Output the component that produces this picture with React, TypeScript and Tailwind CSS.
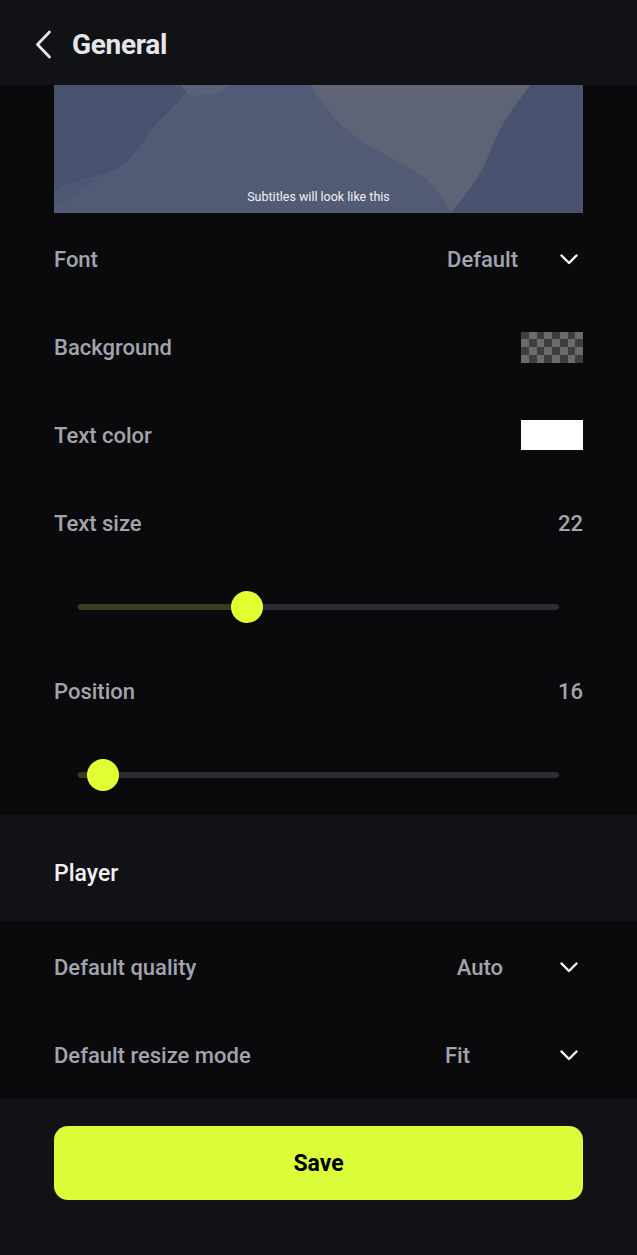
function Chevron() {
  return (
    <svg className="ml-auto w-[18px] h-[11px] mr-[5px]" viewBox="0 0 18 11" fill="none">
      <polyline points="1.5,1.5 9,9 16.5,1.5" stroke="#ffffff" strokeWidth="2.4" strokeLinecap="round" strokeLinejoin="round" />
    </svg>
  );
}

const labelClass = 'flex-1 text-[22px] font-medium text-[#a3a3ad]';

function SelectRow({ label, value, valueClass }: { label: string; value: string; valueClass: string }) {
  return (
    <div className="flex items-center h-[88px] px-[54px]">
      <span className={labelClass}>{label}</span>
      <span className={`text-[22px] font-medium text-[#a3a3ad] ${valueClass}`}>{value}</span>
      <Chevron />
    </div>
  );
}

function Slider({ value, thumbX }: { value: number; thumbX: number }) {
  return (
    <div className="relative h-[80px] mx-[78px] flex items-center">
      <div className="relative w-full h-[6px] rounded-full bg-[#2c2d35]">
        <div className="absolute left-0 top-0 h-[6px] rounded-l-full bg-[#3a3d1c]" style={{ width: thumbX }} />
        <div
          className="absolute top-[-13px] w-[32px] h-[32px] rounded-full bg-[#e2ff32]"
          style={{ left: thumbX - 16 }}
          aria-label={String(value)}
        />
      </div>
    </div>
  );
}

function Checker() {
  const cells = [];
  for (let r = 0; r < 4; r++) {
    for (let c = 0; c < 8; c++) {
      cells.push(
        <div key={`${r}-${c}`} className={(r + c) % 2 === 0 ? 'bg-[#3e3e40]' : 'bg-[#6b6b6d]'} />
      );
    }
  }
  return <div className="grid grid-cols-8 grid-rows-4 w-[62px] h-[31px]">{cells}</div>;
}

export default function App() {
  return (
    <div
      className="w-[637px] h-[1255px] bg-[#0a0a0d] flex flex-col overflow-hidden"
      style={{ fontFamily: 'Roboto, "Noto Sans", sans-serif' }}
    >
      {/* Header */}
      <div className="h-[85px] bg-[#111216] flex items-center pl-[35px] pt-[4px] shrink-0">
        <svg className="w-[17px] h-[29px]" viewBox="0 0 17 29" fill="none">
          <polyline points="14.5,2 2.5,14.5 14.5,27" stroke="#e6e6ea" strokeWidth="2.8" strokeLinecap="round" strokeLinejoin="round" />
        </svg>
        <h1 className="ml-[20px] text-[28px] font-bold text-[#e6e6ea] tracking-[-0.3px]">General</h1>
      </div>

      {/* Preview */}
      <div className="px-[54px]">
        <div className="relative h-[128px] bg-[#525a76] overflow-hidden">
          <svg className="absolute inset-0 w-full h-full" viewBox="0 0 528 128" preserveAspectRatio="none">
            <rect width="528" height="128" fill="#525a76" />
            <path d="M0 0 H136 C 128 15 110 30 96 45 C 85 65 70 85 46 90 C 25 95 10 100 0 106 Z" fill="#47526f" />
            <path d="M126 0 H176 C 168 8 150 12 136 10 C 130 6 128 3 126 0 Z" fill="#5b6176" />
            <path d="M0 106 C 15 100 30 96 46 92 C 30 105 15 115 0 122 Z" fill="#4e5773" />
            <path d="M256 0 H476 C 460 20 445 40 436 65 C 425 95 410 110 396 128 C 390 115 380 100 366 90 C 350 80 330 70 306 55 C 290 45 270 25 256 0 Z" fill="#5e6375" />
            <path d="M476 0 H528 V128 H396 C 410 110 425 95 436 65 C 445 40 460 20 476 0 Z" fill="#49536f" />
          </svg>
          <span className="absolute left-0 right-0 bottom-[6px] text-center text-[12.5px] text-[#f2f2f5]">
            Subtitles will look like this
          </span>
        </div>
      </div>

      {/* Subtitle settings */}
      <div className="mt-[2px]">
        <SelectRow label="Font" value="Default" valueClass="mr-[42px]" />

        <div className="flex items-center h-[88px] px-[54px]">
          <span className={labelClass}>Background</span>
          <Checker />
        </div>

        <div className="flex items-center h-[88px] px-[54px]">
          <span className={labelClass}>Text color</span>
          <div className="w-[62px] h-[30px] bg-white" />
        </div>

        <div className="flex items-center h-[88px] px-[54px]">
          <span className={labelClass}>Text size</span>
          <span className="text-[22px] font-medium text-[#a3a3ad]">22</span>
        </div>
        <Slider value={22} thumbX={169} />

        <div className="flex items-center h-[88px] px-[54px]">
          <span className={labelClass}>Position</span>
          <span className="text-[22px] font-medium text-[#a3a3ad]">16</span>
        </div>
        <Slider value={16} thumbX={25} />
      </div>

      {/* Player section */}
      <div className="h-[106px] bg-[#111216] flex items-center px-[54px] pt-[12px]">
        <h2 className="text-[23px] font-medium text-[#f0f0f3]">Player</h2>
      </div>

      <div className="pt-[2px]">
        <SelectRow label="Default quality" value="Auto" valueClass="mr-[57px]" />
        <SelectRow label="Default resize mode" value="Fit" valueClass="mr-[90px]" />
      </div>

      {/* Footer */}
      <div className="flex-1 bg-[#111216] px-[54px] pt-[27px]">
        <button className="w-full h-[74px] rounded-[14px] bg-[#dcfd3a] text-[23px] font-bold text-black pt-[3px]">
          Save
        </button>
      </div>
    </div>
  );
}
